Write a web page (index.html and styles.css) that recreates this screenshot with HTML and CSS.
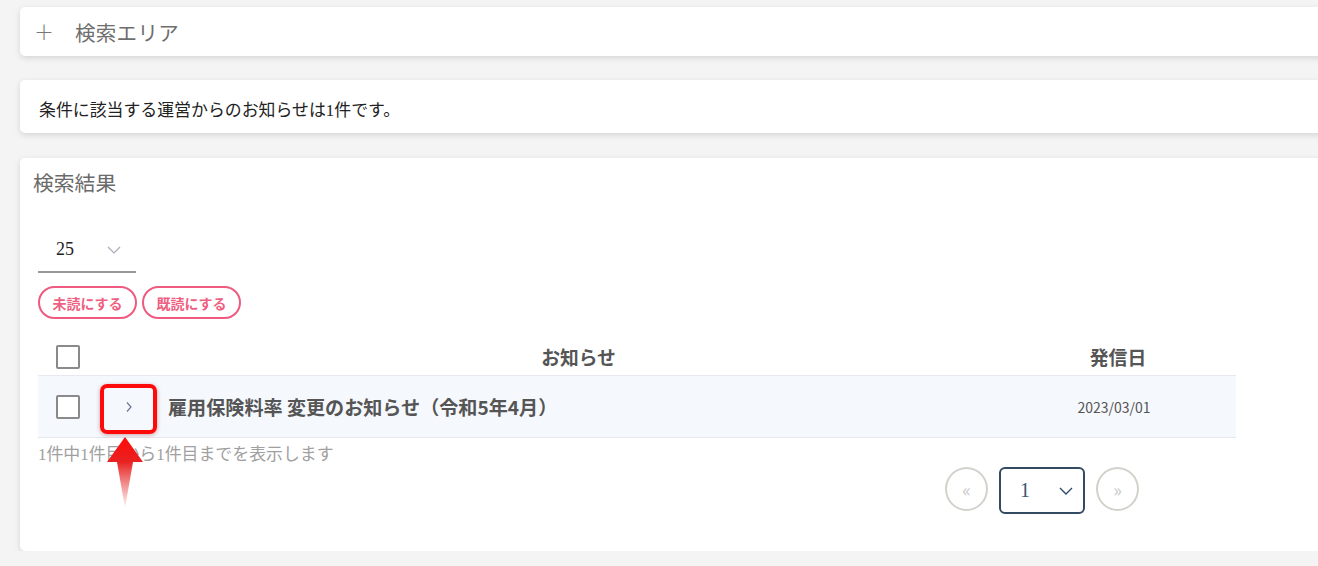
FILE: index.html
```html
<!DOCTYPE html>
<html lang="ja">
<head>
<meta charset="utf-8">
<title>運営からのお知らせ</title>
<link rel="stylesheet" href="styles.css">
</head>
<body>
<div class="page">
  <section class="card search-card">
    <span class="plus">＋</span>
    <span class="search-title">検索エリア</span>
  </section>

  <section class="card count-card">
    <p class="count-text">条件に該当する運営からのお知らせは1件です。</p>
  </section>

  <section class="card result-card">
    <h2 class="result-title">検索結果</h2>

    <div class="per-page">
      <span class="per-page-value">25</span>
      <svg class="per-page-chevron" width="14" height="8" viewBox="0 0 14 8"><path d="M1 1 L7 7 L13 1" fill="none" stroke="#aab" stroke-width="1.2"/></svg>
    </div>

    <div class="actions">
      <button class="pill">未読にする</button>
      <button class="pill">既読にする</button>
    </div>

    <div class="table">
      <div class="row head">
        <div class="cell check"><span class="box"></span></div>
        <div class="cell expand"></div>
        <div class="cell title-col">お知らせ</div>
        <div class="cell date-col">発信日</div>
      </div>
      <div class="row item">
        <div class="cell check"><span class="box"></span></div>
        <div class="cell expand">
          <svg width="8" height="12" viewBox="0 0 8 12"><path d="M2 1.5 L6 6 L2 10.5" fill="none" stroke="#6a7890" stroke-width="1.2"/></svg>
          <span class="highlight"></span>
          <svg class="arrow" width="40" height="72" viewBox="0 0 40 72">
            <defs>
              <linearGradient id="ag" x1="0" y1="0" x2="0" y2="1">
                <stop offset="0" stop-color="#ff0a0a"/>
                <stop offset="0.35" stop-color="#e82222"/>
                <stop offset="1" stop-color="#e83a3a" stop-opacity="0.05"/>
              </linearGradient>
            </defs>
            <polygon points="20,0 38,25 28,25 20,71 12,25 2,25" fill="url(#ag)"/>
          </svg>
        </div>
        <div class="cell title-col item-title">雇用保険料率 変更のお知らせ（令和5年4月）</div>
        <div class="cell date-col item-date">2023/03/01</div>
      </div>
    </div>

    <p class="range">1件中1件目から1件目までを表示します</p>

    <div class="pager">
      <span class="circle">«</span>
      <div class="page-select">
        <span class="page-num">1</span>
        <svg width="14" height="8" viewBox="0 0 14 8"><path d="M1 1 L7 7 L13 1" fill="none" stroke="#2e4a66" stroke-width="1.4"/></svg>
      </div>
      <span class="circle">»</span>
    </div>
  </section>
</div>
</body>
</html>
```

FILE: styles.css
```css
html, body {
  margin: 0;
  padding: 0;
}
body {
  background: #f4f4f4;
  overflow: hidden;
  font-family: "Liberation Serif", "Noto Sans CJK JP", serif;
  color: #333;
}
.page {
  padding: 7px 0 0 20px;
  display: flex;
  flex-direction: column;
  width: 1340px;
}
.card {
  background: #fff;
  border-radius: 5px;
  box-shadow: 0 2px 6px rgba(0, 0, 0, 0.13);
}
.search-card {
  height: 49px;
  display: flex;
  align-items: center;
  padding-left: 14px;
  color: #707070;
}
.plus {
  font-family: "Noto Sans CJK JP", sans-serif;
  font-size: 20px;
  font-weight: 300;
  width: 41px;
  color: #777;
}
.search-title {
  font-size: 20.5px;
  letter-spacing: 0.3px;
  color: #6e6e6e;
}
.count-card {
  margin-top: 24px;
  height: 53px;
  display: flex;
  align-items: center;
  padding-left: 19px;
}
.count-text {
  margin: 4px 0 0;
  font-size: 16.9px;
  color: #222;
}
.result-card {
  margin-top: 25px;
  height: 393px;
  padding: 0 0 0 18px;
  display: flex;
  flex-direction: column;
  position: relative;
}
.result-title {
  margin: 12px 0 0 -5px;
  font-size: 20.8px;
  font-weight: normal;
  color: #6a6a6a;
  line-height: 27px;
}
.per-page {
  margin-top: 39px;
  width: 98px;
  height: 37px;
  border-bottom: 2px solid #999;
  box-sizing: border-box;
  display: flex;
  align-items: flex-start;
  padding-left: 18px;
  padding-top: 2px;
}
.per-page-value {
  font-size: 18px;
  color: #222;
  line-height: 22px;
}
.per-page-chevron {
  margin-left: 33px;
  margin-top: 8px;
}
.actions {
  margin-top: 13px;
  display: flex;
  gap: 5px;
}
.pill {
  width: 99px;
  height: 33px;
  border: 2px solid #ef5a7f;
  border-radius: 17px;
  background: #fff;
  color: #ee5f82;
  font-family: "Noto Sans CJK JP", sans-serif;
  font-weight: bold;
  font-size: 14px;
  padding: 0;
}
.table {
  margin-top: 19px;
  width: 1198px;
}
.row {
  display: grid;
  grid-template-columns: 62px 57px 1fr 236px;
  align-items: center;
}
.row.head {
  height: 37px;
  border-bottom: 1px solid #e6eaf0;
}
.row.item {
  height: 61px;
  background: #f5f8fd;
  border-bottom: 1px solid #e3e7ee;
}
.cell {
  display: flex;
  align-items: center;
}
.check {
  padding-left: 18px;
}
.box {
  width: 20px;
  height: 20px;
  border: 2px solid #8a8a8a;
  border-radius: 2px;
  background: #fff;
}
.title-col, .date-col {
  justify-content: center;
  font-family: "Noto Sans CJK JP", sans-serif;
  font-weight: bold;
  font-size: 18.8px;
  color: #555;
}
.item-title {
  justify-content: flex-start;
  padding-left: 11px;
  font-size: 19.1px;
}
.item-date {
  font-weight: normal;
  font-size: 14px;
  padding-right: 8px;
}
.expand {
  justify-content: center;
  position: relative;
  height: 100%;
}
.highlight {
  position: absolute;
  left: 0;
  top: 8px;
  width: 57px;
  height: 50px;
  box-sizing: border-box;
  border: 4px solid #ff0a0a;
  border-radius: 7px;
  box-shadow: 0 1px 4px rgba(120, 0, 0, 0.35);
}
.arrow {
  position: absolute;
  left: 5px;
  top: 61px;
  z-index: 2;
}
.range {
  margin: 7px 0 0;
  font-size: 16.9px;
  color: #a0a0a0;
  line-height: 20px;
}
.pager {
  margin: 2px 0 0 907px;
  display: flex;
  align-items: flex-start;
  gap: 11px;
}
.circle {
  width: 43px;
  height: 44px;
  box-sizing: border-box;
  border: 2px solid #d2d2cc;
  border-radius: 50%;
  display: flex;
  align-items: center;
  justify-content: center;
  color: #c8c8c8;
  font-size: 18px;
  font-family: "Noto Sans CJK JP", sans-serif;
}
.page-select {
  width: 86px;
  height: 47px;
  box-sizing: border-box;
  border: 2px solid #344a63;
  border-radius: 6px;
  display: flex;
  align-items: center;
  padding-left: 19px;
}
.page-num {
  font-size: 20px;
  color: #3b5670;
  width: 39px;
}
```
